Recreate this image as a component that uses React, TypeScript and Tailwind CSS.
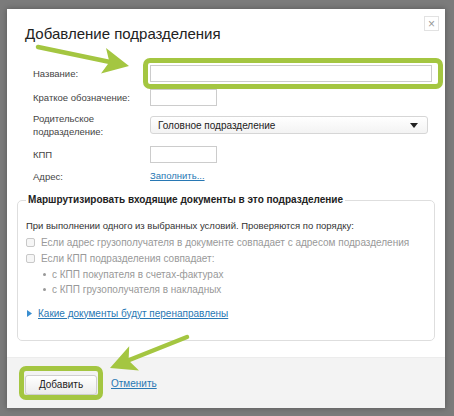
import React from 'react';

const font = { fontFamily: '"Liberation Sans", Arial, sans-serif' };

// Green annotation frame that sits over a control
const Highlight: React.FC<{ className: string }> = ({ className }) => (
  <span className={`pointer-events-none absolute border-[5px] border-[#a4c641] rounded-[7px] ${className}`} />
);

const FormRow: React.FC<{ label: React.ReactNode; h: string; mt: string; children: React.ReactNode }> = ({ label, h, mt, children }) => (
  <div className={`flex items-center pl-[26px] ${h} ${mt}`}>
    <div className="w-[117px] text-[9.5px] leading-[13px] text-[#444]">{label}</div>
    <div className="flex items-center">{children}</div>
  </div>
);

const Checkbox: React.FC = () => (
  <span className="inline-block w-[9px] h-[9px] border border-[#c8c8c8] rounded-[2px] bg-[#f6f6f6]" />
);

export default function App() {
  return (
    <div className="relative w-[454px] h-[416px] overflow-hidden bg-[#7b7b7b] pl-[7px] pt-[9px]" style={font}>
      {/* Modal */}
      <div className="relative w-[438px] h-[399px] bg-white flex flex-col shadow-[0_0_6px_rgba(0,0,0,0.3)]">
        <button className="absolute right-[6px] top-[7px] w-[15px] h-[15px] border border-[#e2e2e2] flex items-center justify-center text-[#999] text-[12px] leading-none">
          ×
        </button>

        <h1 className="pl-[18px] pt-[15px] text-[15px] leading-[20px] text-[#222]">Добавление подразделения</h1>

        <FormRow label="Название:" h="h-[17px]" mt="mt-[21px]">
          <div className="relative">
            <input className="block w-[282px] h-[17px] border border-[#ccc] bg-white" />
            <Highlight className="-left-[7px] -right-[11px] -top-[7px] -bottom-[7px]" />
          </div>
        </FormRow>

        <FormRow label="Краткое обозначение:" h="h-[17px]" mt="mt-[7px]">
          <input className="block w-[67px] h-[17px] border border-[#ccc] bg-white" />
        </FormRow>

        <FormRow label={<>Родительское<br />подразделение:</>} h="h-[26px]" mt="mt-[6px]">
          <div className="w-[278px] h-[18px] border border-[#d6d6d6] rounded-[3px] bg-gradient-to-b from-white to-[#f3f3f3] flex items-center justify-between pl-[7px] pr-[9px]">
            <span className="text-[10px] text-[#222]">Головное подразделение</span>
            <svg width="8" height="5" viewBox="0 0 8 5"><path d="M0 0h8L4 5z" fill="#222" /></svg>
          </div>
        </FormRow>

        <FormRow label="КПП" h="h-[17px]" mt="mt-[8px]">
          <input className="block w-[67px] h-[17px] border border-[#ccc] bg-white" />
        </FormRow>

        <FormRow label="Адрес:" h="h-[14px]" mt="mt-[6px]">
          <a className="text-[9.5px] text-[#2878b4] underline">Заполнить...</a>
        </FormRow>

        {/* Routing settings */}
        <fieldset className="mx-[10px] mt-[10px] border border-[#dedede] rounded-[5px] px-[8px] pb-[20px] text-[10px]">
          <legend className="px-[2px] font-bold text-[#222] leading-[14px]">Маршрутизировать входящие документы в это подразделение</legend>
          <div className="mt-[11px] h-[16px] leading-[16px] text-[9.5px] text-[#333]">
            При выполнении одного из выбранных условий. Проверяются по порядку:
          </div>
          <div className="flex items-center gap-[6px] h-[16px] text-[#999]">
            <Checkbox />
            <span>Если адрес грузополучателя в документе совпадает с адресом подразделения</span>
          </div>
          <div className="flex items-center gap-[6px] h-[16px] text-[#999]">
            <Checkbox />
            <span>Если КПП подразделения совпадает:</span>
          </div>
          <div className="mt-[1px] pl-[17px] text-[#999]">
            <div className="flex items-center gap-[6px] h-[15px]">
              <span className="w-[3px] h-[3px] rounded-full bg-[#999]" />
              <span>с КПП покупателя в счетах-фактурах</span>
            </div>
            <div className="flex items-center gap-[6px] h-[15px]">
              <span className="w-[3px] h-[3px] rounded-full bg-[#999]" />
              <span>с КПП грузополучателя в накладных</span>
            </div>
          </div>
          <div className="mt-[9px] h-[14px] flex items-center gap-[6px] pl-[1px]">
            <svg width="5" height="7" viewBox="0 0 5 7"><path d="M0 0l5 3.5L0 7z" fill="#3a8ed0" /></svg>
            <a className="text-[#2878b4] underline">Какие документы будут перенаправлены</a>
          </div>
        </fieldset>

        {/* Footer */}
        <div className="mt-auto h-[51px] bg-[#f3f3f3] border-t border-[#ececec] flex items-center pl-[18px] gap-[14px]">
          <div className="relative">
            <button className="w-[72px] h-[20px] border border-[#cfcfcf] rounded-[3px] bg-gradient-to-b from-white to-[#ececec] text-[10px] text-[#222] shadow-[0_1px_1px_rgba(0,0,0,0.15)]">
              Добавить
            </button>
            <Highlight className="-left-[6px] -right-[6px] -top-[5px] -bottom-[5px]" />
          </div>
          <a className="text-[10px] text-[#2878b4] underline">Отменить</a>
        </div>
      </div>

      {/* Annotation arrows */}
      <svg className="pointer-events-none absolute inset-0" width="454" height="416" viewBox="0 0 454 416">
        <line x1="38" y1="47" x2="110" y2="62" stroke="#a4c641" strokeWidth="4.5" strokeLinecap="round" />
        <polygon points="129,66 106,48 109.4,61.9 101,73.4" fill="#a4c641" />
        <line x1="187" y1="337" x2="128" y2="360.5" stroke="#a4c641" strokeWidth="4.5" strokeLinecap="round" />
        <polygon points="110,368 129.2,346.2 128.6,360.5 139,370.4" fill="#a4c641" />
      </svg>
    </div>
  );
}
